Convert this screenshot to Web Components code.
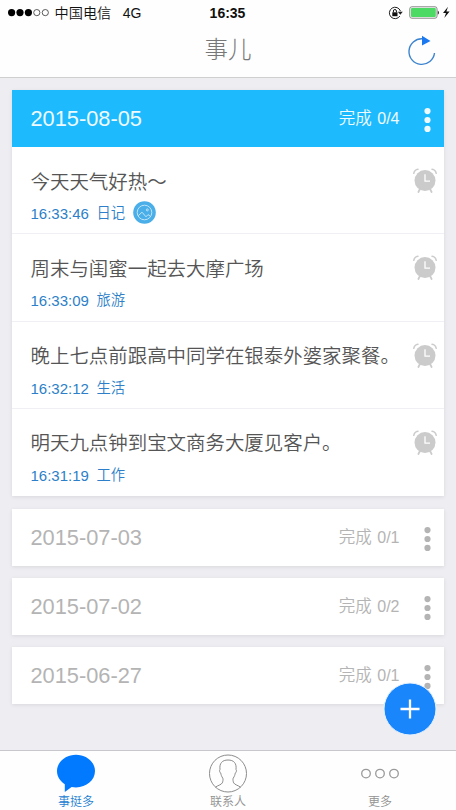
<!DOCTYPE html>
<html lang="zh-CN">
<head>
<meta charset="utf-8">
<title>事儿</title>
<style>
html,body{margin:0;height:100%;overflow:hidden}
body{font-family:"Liberation Sans","Noto Sans CJK SC",sans-serif;background:#eeedf2}
</style>
</head>
<body>
<todo-app></todo-app>
<script>
const define = (name, html) => customElements.define(name, class extends HTMLElement {
  constructor() {
    super();
    const t = document.createElement('template');
    t.innerHTML = html;
    this.attachShadow({ mode: 'open' }).append(t.content.cloneNode(true));
  }
});

define('status-bar', `<style>
:host{display:flex;align-items:center;justify-content:space-between;height:26px;padding:0 6px 0 8px;color:#111;font-size:14px;line-height:26px}
div{display:flex;align-items:center;flex:1;white-space:nowrap}
.cn{margin-left:4.5px;font-size:14.2px;font-weight:350}
.g{margin-left:11.5px}
b{font-weight:700;font-size:14px;margin-right:3px}
.r{justify-content:flex-end}
svg{display:block}
</style>
<div><svg width="42" height="10" viewBox="0 0 42 10"><g fill="#000"><circle cx="3.6" cy="4.6" r="3.6"/><circle cx="12" cy="4.6" r="3.6"/><circle cx="20.4" cy="4.6" r="3.6"/></g><g fill="none" stroke="#333" stroke-width=".8"><circle cx="28.8" cy="4.6" r="3.1"/><circle cx="37.3" cy="4.6" r="3.1"/></g></svg>
<span class="cn">中国电信</span><span class="g">4G</span></div>
<b>16:35</b>
<div class="r"><svg width="64" height="16" viewBox="386 5 64 16">
<path d="M399.9 16A5.7 5.7 0 1 1 400.500 11.2" fill="none" stroke="#222" stroke-width="1"/>
<path d="M397.800 11.800h5l-2.500 3z" fill="#222"/>
<rect x="392.300" y="12.300" width="5.200" height="3.900" fill="#111"/><path d="M393.400 12.300v-1.300a1.500 1.500 0 0 1 3 0V12.300" fill="none" stroke="#111"/>
<rect x="409.8" y="6.800" width="27.200" height="11.400" rx="2" fill="#fff" stroke="#777" stroke-width=".9"/><rect x="411" y="8" width="24.800" height="9" rx="1" fill="#4cd964"/><path d="M437.800 10.400q2.200 2.100 0 4.400z" fill="#111"/>
<path d="M448 6.800l-5 6.300h3l-1.700 5 5.300-6.500h-3.200z" fill="#111"/></svg></div>`);

define('nav-bar', `<style>
:host{display:grid;grid-template-columns:1fr auto 1fr;align-items:center;height:51px;border-bottom:1px solid #cfcfcf;box-sizing:content-box}
h1{grid-column:2;margin:0;font-size:23.5px;font-weight:300;color:#777;line-height:48px;align-self:start}
svg{justify-self:end;align-self:start;margin:8px 18px 0 0}
</style>
<h1><slot></slot></h1>
<svg width="32" height="34" viewBox="406 34 32 34"><path d="M422.500 38.800A12.800 12.800 0 1 0 434.500 53" fill="none" stroke="#3d84d0" stroke-width="1.400"/><path d="M422 35.700l8.500 5.400-8.500 4.400z" fill="#1c78f0"/></svg>`);

define('alarm-icon', `<style>:host{display:block;width:24px;height:26px}svg{display:block}</style>
<svg width="24" height="26" viewBox="0 0 24 26"><g fill="none" stroke="#ccc" stroke-linecap="round"><path d="M.8 5.300Q1.500 1.800 5 1.300M23.200 5.300Q22.500 1.800 19 1.300" stroke-width="1.500"/><path d="M6.700 21.500l-1.300 2.500M17.300 21.500l1.300 2.500" stroke-width="1.800"/></g><circle cx="12" cy="12.600" r="10.500" fill="#cbcbcb"/><path d="M12 6.300v6.900h5" fill="none" stroke="#fff" stroke-width="1.300"/></svg>`);

define('photo-badge', `<style>:host{display:block;width:23px;height:23px;margin-left:8.500px}svg{display:block}</style>
<svg width="23" height="23" viewBox="0 0 23 23"><circle cx="11.500" cy="11.500" r="11.300" fill="#4aaee8"/><g fill="none" stroke="#bfe5fa" stroke-width="1"><circle cx="11.500" cy="11.500" r="7.300"/><path d="M5.200 14.800l3.800-3.600 4 4.600 2-2.200 2.600 1.800"/><circle cx="14.300" cy="8.900" r="1"/></g></svg>`);

define('todo-item', `<style>
:host{display:flex;justify-content:space-between;box-sizing:border-box;height:87.300px;padding:19.500px 7.500px 0 18.500px;border-bottom:1px solid #f0eff3}
:host(:last-child){border-bottom:0;height:86.800px}
.t{font:350 19.450px/28px "Noto Sans CJK SC",sans-serif;color:#555;white-space:nowrap}
.m{display:flex;align-items:center;height:23px;margin-top:6px;color:#2c7fc8;font-size:15px;line-height:23px}
.m ::slotted(span){padding-top:3px}
.m ::slotted([slot=tag]){font-size:14.300px;font-weight:350;margin-left:7.500px}
alarm-icon{margin-top:1.500px}
</style>
<div><div class="t"><slot></slot></div><div class="m"><slot name="time"></slot><slot name="tag"></slot><slot name="badge"></slot></div></div><alarm-icon></alarm-icon>`);

define('day-card', `<style>
:host{display:block;background:#fff;box-shadow:0 1px 4px rgba(0,0,0,.09);color:#b4b4b4}
header{display:flex;align-items:center;height:57px;padding:0 13.500px 0 18.500px}
:host([open]) header{background:#1ebafe;color:#effaff}
.d{font-size:21.800px;flex:1}
.c{display:flex;align-items:center;gap:5.500px;font-size:16px;font-weight:350;margin-right:24px}
::slotted([slot=label]){font-size:16.500px;line-height:20px;margin-top:-2px}
svg{display:block;margin-top:2px}
</style>
<header><span class="d"><slot name="date"></slot></span><span class="c"><slot name="label"></slot><slot name="count"></slot></span><svg width="7" height="26" viewBox="0 0 7 26" fill="currentColor"><circle cx="3.500" cy="4.100" r="3.100"/><circle cx="3.500" cy="13" r="3.100"/><circle cx="3.500" cy="21.900" r="3.100"/></svg></header>
<slot></slot>`);

define('add-button', `<style>:host{display:block;width:54px;height:54px}svg{display:block}</style>
<svg width="54" height="54" viewBox="0 0 54 54"><circle cx="27" cy="27" r="26" fill="#1a86fc" stroke="#e7f2ff" stroke-width="1"/><path d="M17.500 27h19M27 17.500v19" stroke="#fff" stroke-width="2.300"/></svg>`);

define('tab-item', `<style>
:host{display:flex;flex-direction:column;align-items:center;flex:1;color:#929292;font-size:12px;font-weight:350;line-height:16px}
:host([active]){color:#2580d0}
.i{height:42px;margin-bottom:1px}
::slotted(svg){display:block}
</style><div class="i"><slot name="icon"></slot></div><span><slot></slot></span>`);

define('tab-bar', `<style>:host{display:flex;height:59px;background:#fefefe;border-top:1px solid #c8c8cc}</style><slot></slot>`);

define('todo-app', `<style>
:host{display:flex;flex-direction:column;width:456px;height:810px;position:relative;overflow:hidden}
.top{background:#fefefe}
main{flex:1;display:flex;flex-direction:column;gap:12.200px;padding:12px 12px 0}
.first{margin-bottom:1.200px}
add-button{position:absolute;left:383.300px;top:681.500px}
</style>
<div class="top"><status-bar></status-bar><nav-bar>事儿</nav-bar></div>
<main>
<day-card open class="first"><span slot="date">2015-08-05</span><span slot="label">完成</span><span slot="count">0/4</span>
<todo-item>今天天气好热～<span slot="time">16:33:46</span><span slot="tag">日记</span><photo-badge slot="badge"></photo-badge></todo-item>
<todo-item>周末与闺蜜一起去大摩广场<span slot="time">16:33:09</span><span slot="tag">旅游</span></todo-item>
<todo-item>晚上七点前跟高中同学在银泰外婆家聚餐。<span slot="time">16:32:12</span><span slot="tag">生活</span></todo-item>
<todo-item>明天九点钟到宝文商务大厦见客户。<span slot="time">16:31:19</span><span slot="tag">工作</span></todo-item></day-card>
<day-card><span slot="date">2015-07-03</span><span slot="label">完成</span><span slot="count">0/1</span></day-card>
<day-card><span slot="date">2015-07-02</span><span slot="label">完成</span><span slot="count">0/2</span></day-card>
<day-card><span slot="date">2015-06-27</span><span slot="label">完成</span><span slot="count">0/1</span></day-card>
</main>
<tab-bar>
<tab-item active><svg slot="icon" width="40" height="42" viewBox="0 0 40 42"><path d="M20 3.800c10.500 0 19 7.200 19 16.300S30.500 36.400 20 36.400c-1.500 0-3-.1-4.400-.4L8.800 41V33.200C4 30.200 1 25.500 1 20.100 1 11 9.500 3.800 20 3.800z" fill="#027aff"/></svg>事挺多</tab-item>
<tab-item><svg slot="icon" width="40" height="42" viewBox="0 0 40 42" fill="none" stroke="#8c8c8c" stroke-width="1"><circle cx="20" cy="22.500" r="18.500"/><path d="M7.500 36.200c2-1.700 6-2.500 6.800-4.300.6-1.200 1-3.700.5-4.700-1.300-1.800-1.800-3.600-2.100-5.200-1.200-.8-1.500-2.700-.7-3.600C11.200 12.200 14.300 9 20 9s8.800 3.200 8 9.400c.8.9.5 2.800-.7 3.600-.3 1.600-.8 3.400-2.100 5.200-.5 1-.1 3.500.5 4.700.8 1.800 4.800 2.600 6.800 4.300"/></svg>联系人</tab-item>
<tab-item><svg slot="icon" width="40" height="42" viewBox="0 0 40 42" fill="none" stroke="#9a9a9a" stroke-width="1.300"><circle cx="6" cy="22.600" r="4.300"/><circle cx="20" cy="22.600" r="4.300"/><circle cx="34" cy="22.600" r="4.300"/></svg>更多</tab-item>
</tab-bar>
<add-button></add-button>`);
</script>
</body>
</html>
